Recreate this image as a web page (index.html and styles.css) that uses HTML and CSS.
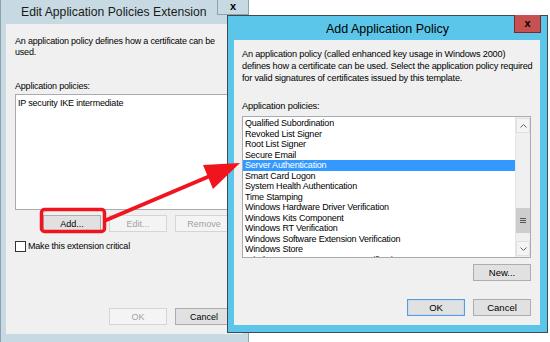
FILE: index.html
```html
<!DOCTYPE html>
<html>
<head>
<meta charset="utf-8">
<link rel="stylesheet" href="styles.css">
</head>
<body>
<div class="desk">
  <section class="win back">
    <header class="titlebar">
      <span class="title">Edit Application Policies Extension</span>
      <span class="close">x</span>
    </header>
    <div class="client">
      <p class="desc">An application policy defines how a certificate can be<br>used.</p>
      <div class="lbl">Application policies:</div>
      <div class="listbox">
        <div class="items"><div class="item">IP security IKE intermediate</div></div>
      </div>
      <div class="btnrow">
        <button class="btn">Add...</button>
        <button class="btn" disabled>Edit...</button>
        <button class="btn" disabled>Remove</button>
      </div>
      <label class="check"><span class="box"></span>Make this extension critical</label>
      <div class="btnrow bottom">
        <button class="btn" disabled>OK</button>
        <button class="btn">Cancel</button>
      </div>
    </div>
  </section>

  <section class="win front">
    <header class="titlebar">
      <span class="title">Add Application Policy</span>
      <span class="close">x</span>
    </header>
    <div class="client">
      <p class="desc">An application policy (called enhanced key usage in Windows 2000)<br>defines how a certificate can be used. Select the application policy required<br>for valid signatures of certificates issued by this template.</p>
      <div class="lbl">Application policies:</div>
      <div class="listbox">
        <div class="items">
          <div class="item">Qualified Subordination</div>
          <div class="item">Revoked List Signer</div>
          <div class="item">Root List Signer</div>
          <div class="item">Secure Email</div>
          <div class="item sel">Server Authentication</div>
          <div class="item">Smart Card Logon</div>
          <div class="item">System Health Authentication</div>
          <div class="item">Time Stamping</div>
          <div class="item">Windows Hardware Driver Verification</div>
          <div class="item">Windows Kits Component</div>
          <div class="item">Windows RT Verification</div>
          <div class="item">Windows Software Extension Verification</div>
          <div class="item">Windows Store</div>
          <div class="item">Windows System Component Verification</div>
        </div>
        <div class="sb">
          <div class="sbbtn"><svg width="7" height="4" viewBox="0 0 7 4"><path d="M0.5 3.5 L3.5 0.5 L6.5 3.5" fill="none" stroke="#606060" stroke-width="1"/></svg></div>
          <div class="track"><div class="thumb"><span class="grip"></span></div></div>
          <div class="sbbtn"><svg width="7" height="4" viewBox="0 0 7 4"><path d="M0.5 0.5 L3.5 3.5 L6.5 0.5" fill="none" stroke="#606060" stroke-width="1"/></svg></div>
        </div>
      </div>
      <div class="btnrow">
        <button class="btn">New...</button>
      </div>
      <div class="btnrow bottom">
        <button class="btn default">OK</button>
        <button class="btn">Cancel</button>
      </div>
    </div>
  </section>

  <svg class="annot" width="550" height="342" viewBox="0 0 550 342">
    <rect x="41.5" y="209.5" width="63" height="22" rx="3" ry="3" fill="none" stroke="#f0141e" stroke-width="3.5"/>
    <line x1="104" y1="221" x2="210" y2="176" stroke="#f0141e" stroke-width="4"/>
    <polygon points="240,163 203,165 213,189" fill="#f0141e"/>
  </svg>
</div>
</body>
</html>
```
FILE: styles.css
```css
* { box-sizing: border-box; margin: 0; padding: 0; }
html, body { width: 550px; height: 342px; overflow: hidden; background: #ffffff; }
body {
  font-family: "Liberation Sans", Arial, sans-serif;
  font-size: 9px;
  letter-spacing: -0.2px;
  color: #000;
}
.desk { position: relative; width: 550px; height: 342px; overflow: hidden; }

.win { position: absolute; display: flex; flex-direction: column; }

.back {
  left: 0; top: -1px; width: 249px; height: 345px;
  background: #c7dae3;
  border: 1px solid #8fa2ab;
}
.front {
  left: 227px; top: 15px; width: 321px; height: 318px;
  background: #5bc6ea;
  border: 1px solid #3d4a50;
}

.titlebar { display: flex; align-items: flex-start; flex: none; height: 24px; }

.title { font-size: 12.2px; letter-spacing: 0; white-space: nowrap; color: #000; }
.back .title { flex: 1; padding: 5px 0 0 20px; color: #1a1a1a; }
.front .title { flex: 1; text-align: center; padding-top: 6px; padding-left: 33px; font-size: 12.5px; }

.close {
  flex: none; display: flex; align-items: center; justify-content: center;
  font-weight: bold; font-size: 11px; letter-spacing: 0; line-height: 1;
}
.back .close {
  width: 32px; height: 15px; margin-right: -1px;
  background: #c7dae3;
  border: 1px solid #8fa2ab; border-top: none;
  padding-bottom: 2px;
}
.front .close {
  width: 27px; height: 18px; margin-top: -1px; margin-right: 6px;
  background: #c75050;
  border: 1px solid #7a2a2a; border-top: none;
  padding-bottom: 1px;
}

.client {
  flex: 1; display: flex; flex-direction: column;
  background: #f0f0f0;
}
.back .client { margin: 0 5px 9px 5px; padding: 12px 10px 9px 9px; }
.front .client { margin: 0 7px 7px 6px; padding: 8px 9px 9px 8px; }

.desc { line-height: 11px; white-space: nowrap; }
.front .desc { font-size: 9.2px; line-height: 12px; }

.lbl { line-height: 11px; }
.back .lbl { margin-top: 23px; }
.front .lbl { font-size: 9.3px; margin-top: 16px; line-height: 12px; }

.listbox {
  display: flex; background: #fff;
  border: 1px solid #a9abb1;
}
.back .listbox { margin-top: 2px; height: 116px; }
.front .listbox { margin-top: 4px; height: 142px; }

.items { flex: 1; padding-top: 1px; overflow: hidden; }
.item { line-height: 10.5px; height: 10.5px; padding-left: 2px; white-space: nowrap; }
.back .item { padding-top: 2px; height: auto; }
.item.sel { background: #3399ff; color: #fff; }

.sb {
  flex: none; width: 15px; display: flex; flex-direction: column;
  background: #f0f0f0; border-left: 1px solid #e6e6e6;
}
.sbbtn {
  height: 15px; display: flex; align-items: center; justify-content: center;
  background: #f4f4f4; border: 1px solid #e0e0e0; margin-top: 1px;
}
.sbbtn:last-child { margin-top: 0; margin-bottom: 1px; }
.track { flex: 1; display: flex; flex-direction: column; }
.thumb {
  margin-top: 75px; height: 25px;
  background: #cdcdcd;
  display: flex; align-items: center; justify-content: center;
}
.grip {
  width: 6px; height: 5px;
  border-top: 1px solid #555; border-bottom: 1px solid #555;
  position: relative;
}
.grip::after {
  content: ""; position: absolute; left: 0; right: 0; top: 1px; height: 1px; background: #555;
}

.btnrow { display: flex; justify-content: flex-end; gap: 8px; }
.back .btnrow { margin-top: 5px; }
.front .btnrow { margin-top: 6px; }
.btnrow.bottom { margin-top: auto !important; }

.btn {
  width: 58px; height: 17px;
  font: inherit; letter-spacing: 0;
  background: #e1e1e1; color: #000;
  border: 1px solid #adadad;
  display: flex; align-items: center; justify-content: center;
}
.front .btn { font-size: 9.5px; }
.btn:disabled { background: #f4f4f4; color: #a3a3a3; border-color: #d5d5d5; }
.btn.default { border-color: #5a9ad6; box-shadow: inset 0 0 0 1px #c5dcf2; }

.check { display: flex; align-items: center; gap: 2px; margin-top: 9px; line-height: 11px; }
.box { width: 11px; height: 11px; border: 1px solid #333; background: #fff; flex: none; }

.annot { position: absolute; left: 0; top: 0; pointer-events: none; }
```
